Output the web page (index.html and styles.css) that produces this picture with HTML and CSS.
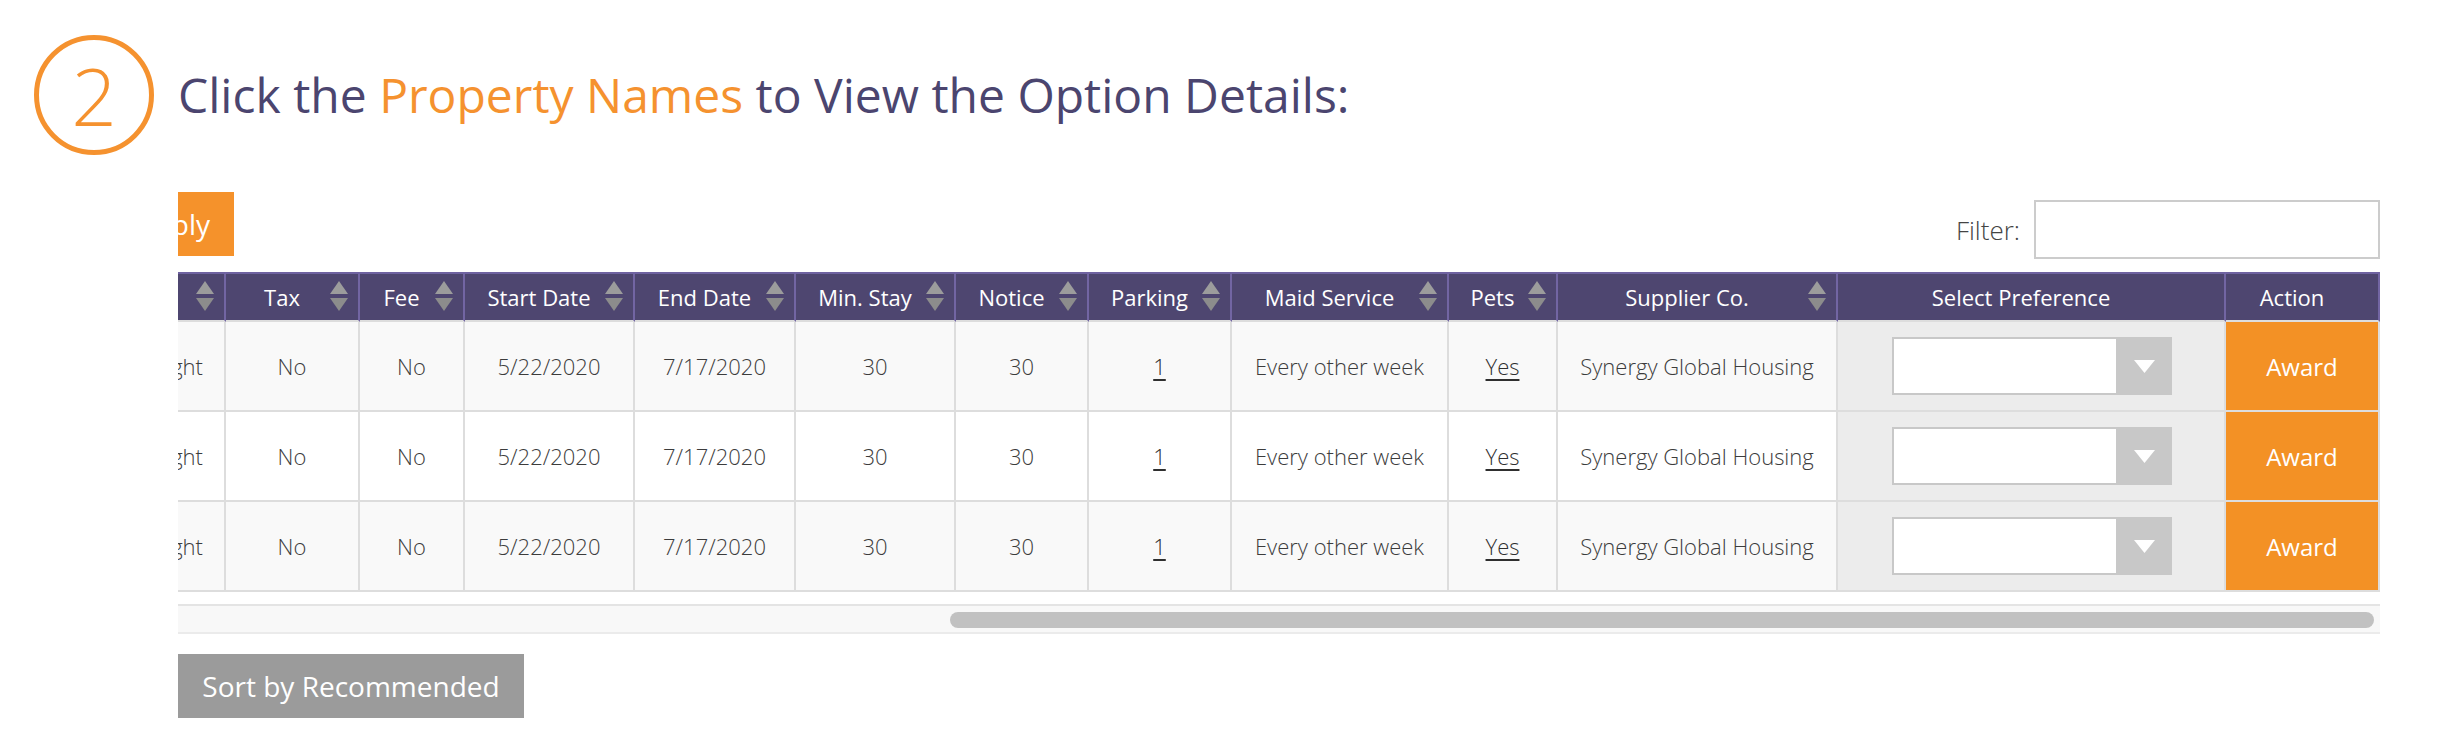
FILE: index.html
```html
<!DOCTYPE html>
<html lang="en">
<head>
<meta charset="utf-8">
<title>Option Details</title>
<link rel="stylesheet" href="styles.css">
</head>
<body>
<div class="page">
  <header class="step">
    <div class="step-num">2</div>
    <h1 class="step-title">Click the <span class="accent">Property Names</span> to View the Option Details:</h1>
  </header>

  <section class="content">
    <div class="toolbar">
      <button class="btn btn-apply" type="button">Apply</button>
      <label class="filter">Filter: <input class="filter-input" type="text"></label>
    </div>

    <div class="table-scroll">
      <table class="grid">
        <colgroup>
          <col class="c-rate"><col class="c-tax"><col class="c-fee"><col class="c-start"><col class="c-end"><col class="c-min"><col class="c-notice"><col class="c-park"><col class="c-maid"><col class="c-pets"><col class="c-supp"><col class="c-pref"><col class="c-act">
        </colgroup>
        <thead>
          <tr>
            <th class="sort">Rate<svg class="arrows" viewBox="0 0 18 30"><path class="up" d="M9 0 L18 13 L0 13 Z"/><path class="down" d="M0 17 L18 17 L9 30 Z"/></svg></th>
            <th class="sort">Tax<svg class="arrows" viewBox="0 0 18 30"><path class="up" d="M9 0 L18 13 L0 13 Z"/><path class="down" d="M0 17 L18 17 L9 30 Z"/></svg></th>
            <th class="sort">Fee<svg class="arrows" viewBox="0 0 18 30"><path class="up" d="M9 0 L18 13 L0 13 Z"/><path class="down" d="M0 17 L18 17 L9 30 Z"/></svg></th>
            <th class="sort">Start Date<svg class="arrows" viewBox="0 0 18 30"><path class="up" d="M9 0 L18 13 L0 13 Z"/><path class="down" d="M0 17 L18 17 L9 30 Z"/></svg></th>
            <th class="sort">End Date<svg class="arrows" viewBox="0 0 18 30"><path class="up" d="M9 0 L18 13 L0 13 Z"/><path class="down" d="M0 17 L18 17 L9 30 Z"/></svg></th>
            <th class="sort">Min. Stay<svg class="arrows" viewBox="0 0 18 30"><path class="up" d="M9 0 L18 13 L0 13 Z"/><path class="down" d="M0 17 L18 17 L9 30 Z"/></svg></th>
            <th class="sort">Notice<svg class="arrows" viewBox="0 0 18 30"><path class="up" d="M9 0 L18 13 L0 13 Z"/><path class="down" d="M0 17 L18 17 L9 30 Z"/></svg></th>
            <th class="sort">Parking<svg class="arrows" viewBox="0 0 18 30"><path class="up" d="M9 0 L18 13 L0 13 Z"/><path class="down" d="M0 17 L18 17 L9 30 Z"/></svg></th>
            <th class="sort">Maid Service<svg class="arrows" viewBox="0 0 18 30"><path class="up" d="M9 0 L18 13 L0 13 Z"/><path class="down" d="M0 17 L18 17 L9 30 Z"/></svg></th>
            <th class="sort">Pets<svg class="arrows" viewBox="0 0 18 30"><path class="up" d="M9 0 L18 13 L0 13 Z"/><path class="down" d="M0 17 L18 17 L9 30 Z"/></svg></th>
            <th class="sort">Supplier Co.<svg class="arrows" viewBox="0 0 18 30"><path class="up" d="M9 0 L18 13 L0 13 Z"/><path class="down" d="M0 17 L18 17 L9 30 Z"/></svg></th>
            <th>Select Preference</th>
            <th>Action</th>
          </tr>
        </thead>
        <tbody>
          <tr>
            <td class="rate">Per Night</td><td>No</td><td>No</td><td>5/22/2020</td><td>7/17/2020</td><td>30</td><td>30</td>
            <td><a class="lnk" href="#">1</a></td><td>Every other week</td><td><a class="lnk" href="#">Yes</a></td>
            <td>Synergy Global Housing</td>
            <td class="pref"><div class="select"><span class="select-val"></span><span class="select-btn"><svg viewBox="0 0 21 13"><path d="M0 0 L21 0 L10.5 13 Z"/></svg></span></div></td>
            <td class="act">Award</td>
          </tr>
          <tr>
            <td class="rate">Per Night</td><td>No</td><td>No</td><td>5/22/2020</td><td>7/17/2020</td><td>30</td><td>30</td>
            <td><a class="lnk" href="#">1</a></td><td>Every other week</td><td><a class="lnk" href="#">Yes</a></td>
            <td>Synergy Global Housing</td>
            <td class="pref"><div class="select"><span class="select-val"></span><span class="select-btn"><svg viewBox="0 0 21 13"><path d="M0 0 L21 0 L10.5 13 Z"/></svg></span></div></td>
            <td class="act">Award</td>
          </tr>
          <tr>
            <td class="rate">Per Night</td><td>No</td><td>No</td><td>5/22/2020</td><td>7/17/2020</td><td>30</td><td>30</td>
            <td><a class="lnk" href="#">1</a></td><td>Every other week</td><td><a class="lnk" href="#">Yes</a></td>
            <td>Synergy Global Housing</td>
            <td class="pref"><div class="select"><span class="select-val"></span><span class="select-btn"><svg viewBox="0 0 21 13"><path d="M0 0 L21 0 L10.5 13 Z"/></svg></span></div></td>
            <td class="act">Award</td>
          </tr>
        </tbody>
      </table>
    </div>

    <div class="hscroll"><div class="hscroll-thumb"></div></div>

    <button class="btn btn-sort" type="button">Sort by Recommended</button>
  </section>
</div>
</body>
</html>
```

FILE: styles.css
```css
* { box-sizing: border-box; }

html, body {
  margin: 0;
  padding: 0;
  background: #ffffff;
}

body {
  font-family: "Open Sans", "Noto Sans", "Liberation Sans", sans-serif;
  color: #444444;
}

.page {
  padding: 35px 0 0 34px;
}

/* ---------- Step heading ---------- */
.step {
  display: flex;
  align-items: center;
  gap: 24px;
}

.step-num {
  width: 120px;
  height: 120px;
  flex: none;
  border: 5px solid #f5922f;
  border-radius: 50%;
  display: flex;
  align-items: center;
  justify-content: center;
  color: #f5922f;
  font-size: 80px;
  font-weight: 350;
  line-height: 1;
}

.step-title {
  margin: 0;
  font-size: 48px;
  font-weight: 400;
  color: #4b456f;
  line-height: 1.2;
}

.accent { color: #f5922f; }

/* ---------- Content ---------- */
.content {
  margin: 37px 0 0 144px;
  width: 2202px;
}

.btn {
  border: 0;
  font-family: inherit;
  color: #ffffff;
  font-size: 28px;
  font-weight: 400;
  height: 64px;
  padding: 0 24px;
  cursor: pointer;
}

.toolbar {
  display: flex;
  justify-content: space-between;
  align-items: flex-start;
  overflow: hidden;
  height: 80px;
}

.btn-apply {
  background: #f5922b;
  width: 121px;
  margin-left: -65px;
  text-align: left;
}

.filter {
  display: flex;
  align-items: center;
  gap: 14px;
  margin-top: 8px;
  font-size: 26px;
  font-weight: 300;
  color: #444444;
}

.filter-input {
  width: 346px;
  height: 59px;
  border: 2px solid #cccccc;
  background: #ffffff;
  font-family: inherit;
  font-size: 22px;
  outline: none;
}

/* ---------- Table ---------- */
.table-scroll {
  overflow: hidden;
  width: 2202px;
}

.grid {
  table-layout: fixed;
  border-collapse: separate;
  border-spacing: 0;
  width: 2304px;
  margin-left: -102px;
}

.c-rate { width: 150px; }
.c-tax { width: 134px; }
.c-fee { width: 105px; }
.c-start { width: 170px; }
.c-end { width: 161px; }
.c-min { width: 160px; }
.c-notice { width: 133px; }
.c-park { width: 143px; }
.c-maid { width: 217px; }
.c-pets { width: 109px; }
.c-supp { width: 280px; }
.c-pref { width: 388px; }
.c-act { width: 154px; }

.grid th {
  position: relative;
  height: 50px;
  padding: 0 30px 0 10px;
  background: #4e4670;
  color: #ffffff;
  font-size: 22px;
  font-weight: 400;
  text-align: center;
  white-space: nowrap;
  border-top: 2px solid #6e62a0;
  border-right: 2px solid #7265a3;
  border-bottom: 2px solid #dddddd;
}

.arrows {
  position: absolute;
  right: 10px;
  top: 50%;
  width: 18px;
  height: 30px;
  margin-top: -16px;
}
.arrows .up { fill: #9c9c9c; }
.arrows .down { fill: #8c8c8c; }

.grid td {
  height: 90px;
  padding: 0 6px;
  text-align: center;
  white-space: nowrap;
  font-size: 22px;
  font-weight: 300;
  color: #3c3c3c;
  border-right: 2px solid #dddddd;
  border-bottom: 2px solid #dddddd;
  background: #f9f9f9;
}

.grid tbody tr:nth-child(even) td { background: #ffffff; }

.grid tbody tr td.rate { padding: 0 0 0 14px; }

.lnk {
  color: #2f2f2f;
  text-decoration: underline;
  text-decoration-thickness: 2px;
  text-underline-offset: 4px;
}

.grid tbody tr td.pref {
  background: #ececec;
  padding: 0;
}

.select {
  display: flex;
  width: 280px;
  height: 58px;
  margin: 0 0 0 54px;
  border: 2px solid #c8c8c8;
  background: #ffffff;
}
.select-val { flex: 1; }
.select-btn {
  width: 56px;
  margin: -2px -2px -2px 0;
  background: #c8c8c8;
  display: flex;
  align-items: center;
  justify-content: center;
}
.select-btn svg { width: 21px; height: 13px; fill: #ffffff; }

.grid tbody tr td.act {
  background: #f39125;
  color: #ffffff;
  font-size: 24px;
  font-weight: 400;
}

/* ---------- Horizontal scrollbar ---------- */
.hscroll {
  margin-top: 12px;
  height: 30px;
  background: #f8f8f8;
  border-top: 2px solid #e4e4e4;
  border-bottom: 2px solid #ebebeb;
  padding-top: 6px;
}
.hscroll-thumb {
  margin-left: 772px;
  width: 1424px;
  height: 16px;
  border-radius: 8px;
  background: #c1c1c1;
}

.btn-sort {
  display: block;
  margin-top: 20px;
  background: #9b9b9b;
  width: 346px;
}
```
